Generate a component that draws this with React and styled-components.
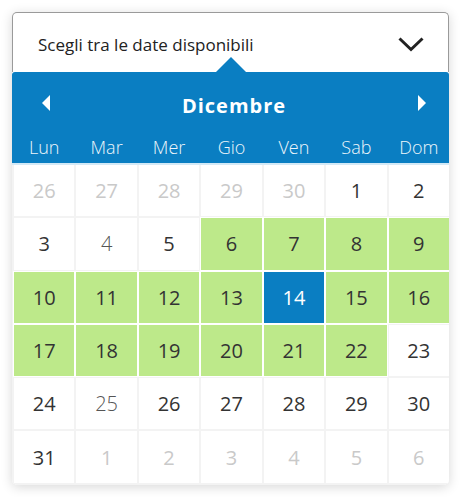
import React from "react";
import styled, { createGlobalStyle } from "styled-components";

const Global = createGlobalStyle`
  html, body { margin: 0; padding: 0; background: #fff; }
  body { font-family: "Open Sans", "Liberation Sans", sans-serif; }
`;

const Page = styled.div`
  padding: 12px;
`;

const Card = styled.div`
  width: 437px;
  background: #fff;
  border-radius: 5px;
  box-shadow: 0 2px 12px rgba(0, 0, 0, 0.16);
`;

const Header = styled.div`
  position: relative;
  box-sizing: border-box;
  height: 60px;
  border: 1px solid #9a9a9a;
  border-bottom: none;
  border-radius: 5px 5px 0 0;
  display: flex;
  align-items: center;
  justify-content: space-between;
  padding: 4px 24px 0 25px;
`;

const Label = styled.span`
  font-size: 17px;
  color: #222;
`;

const Pointer = styled.div`
  position: absolute;
  left: 50%;
  bottom: 0;
  transform: translateX(-50%);
  width: 0;
  height: 0;
  border-left: 15px solid transparent;
  border-right: 15px solid transparent;
  border-bottom: 15px solid #0a7ec2;
`;

const Blue = styled.div`
  background: #0a7ec2;
  border-radius: 3px 3px 0 0;
  padding: 18px 0 4px;
  border-bottom: 2px solid #d3e9f6;
`;

const Nav = styled.div`
  height: 30px;
  display: flex;
  align-items: center;
  justify-content: space-between;
  padding: 0 23px 0 30px;
  margin-bottom: 15px;
`;

const Month = styled.div`
  font-size: 20px;
  font-weight: 700;
  letter-spacing: 1px;
  color: #fff;
`;

const Arrow = styled.span`
  width: 0;
  height: 0;
  border-top: 8.5px solid transparent;
  border-bottom: 8.5px solid transparent;
  ${(p) =>
    p.dir === "left"
      ? "border-right: 8px solid #fff;"
      : "border-left: 8px solid #fff;"}
  margin-top: -5px;
`;

const Cols = styled.div`
  display: grid;
  grid-template-columns: repeat(7, 1fr);
  column-gap: 2px;
  padding-left: 2px;
`;

const Weekday = styled.div`
  text-align: center;
  font-size: 18px;
  font-weight: 300;
  line-height: 24px;
  color: #eef6fb;
`;

const Grid = styled(Cols)`
  row-gap: 2px;
  background: #f3f3f3;
  padding-bottom: 2px;
  border-radius: 0 0 5px 5px;
  overflow: hidden;
`;

const colors = {
  other: { bg: "#fff", fg: "#c9c9c9", w: 400 },
  normal: { bg: "#fff", fg: "#333", w: 400 },
  soft: { bg: "#fff", fg: "#555", w: 300 },
  avail: { bg: "#bde98a", fg: "#333", w: 400 },
  sel: { bg: "#0a7ec2", fg: "#fff", w: 400 },
};

const Day = styled.div`
  height: 51.3px;
  display: flex;
  align-items: center;
  justify-content: center;
  font-size: 20px;
  background: ${(p) => colors[p.kind].bg};
  color: ${(p) => colors[p.kind].fg};
  font-weight: ${(p) => colors[p.kind].w};
  box-shadow: ${(p) =>
    p.kind === "avail" || p.kind === "sel" ? "0 0 0 1px #fff" : "none"};
  position: relative;
`;

const days = [];
[26, 27, 28, 29, 30].forEach((d) => days.push([d, "other"]));
for (let d = 1; d <= 31; d++) {
  let k = "normal";
  if (d >= 6 && d <= 22) k = "avail";
  if (d === 14) k = "sel";
  if (d === 4 || d === 25) k = "soft";
  days.push([d, k]);
}
[1, 2, 3, 4, 5, 6].forEach((d) => days.push([d, "other"]));

const weekdays = ["Lun", "Mar", "Mer", "Gio", "Ven", "Sab", "Dom"];

export default function App() {
  return (
    <Page>
      <Global />
      <Card>
        <Header>
          <Label>Scegli tra le date disponibili</Label>
          <svg width="26" height="15" viewBox="0 0 26 15">
            <polyline
              points="1.5,1.5 13,12.5 24.5,1.5"
              fill="none"
              stroke="#222"
              strokeWidth="3"
            />
          </svg>
          <Pointer />
        </Header>
        <Blue>
          <Nav>
            <Arrow dir="left" />
            <Month>Dicembre</Month>
            <Arrow dir="right" />
          </Nav>
          <Cols>
            {weekdays.map((w) => (
              <Weekday key={w}>{w}</Weekday>
            ))}
          </Cols>
        </Blue>
        <Grid>
          {days.map(([d, k], i) => (
            <Day key={i} kind={k}>
              {d}
            </Day>
          ))}
        </Grid>
      </Card>
    </Page>
  );
}
